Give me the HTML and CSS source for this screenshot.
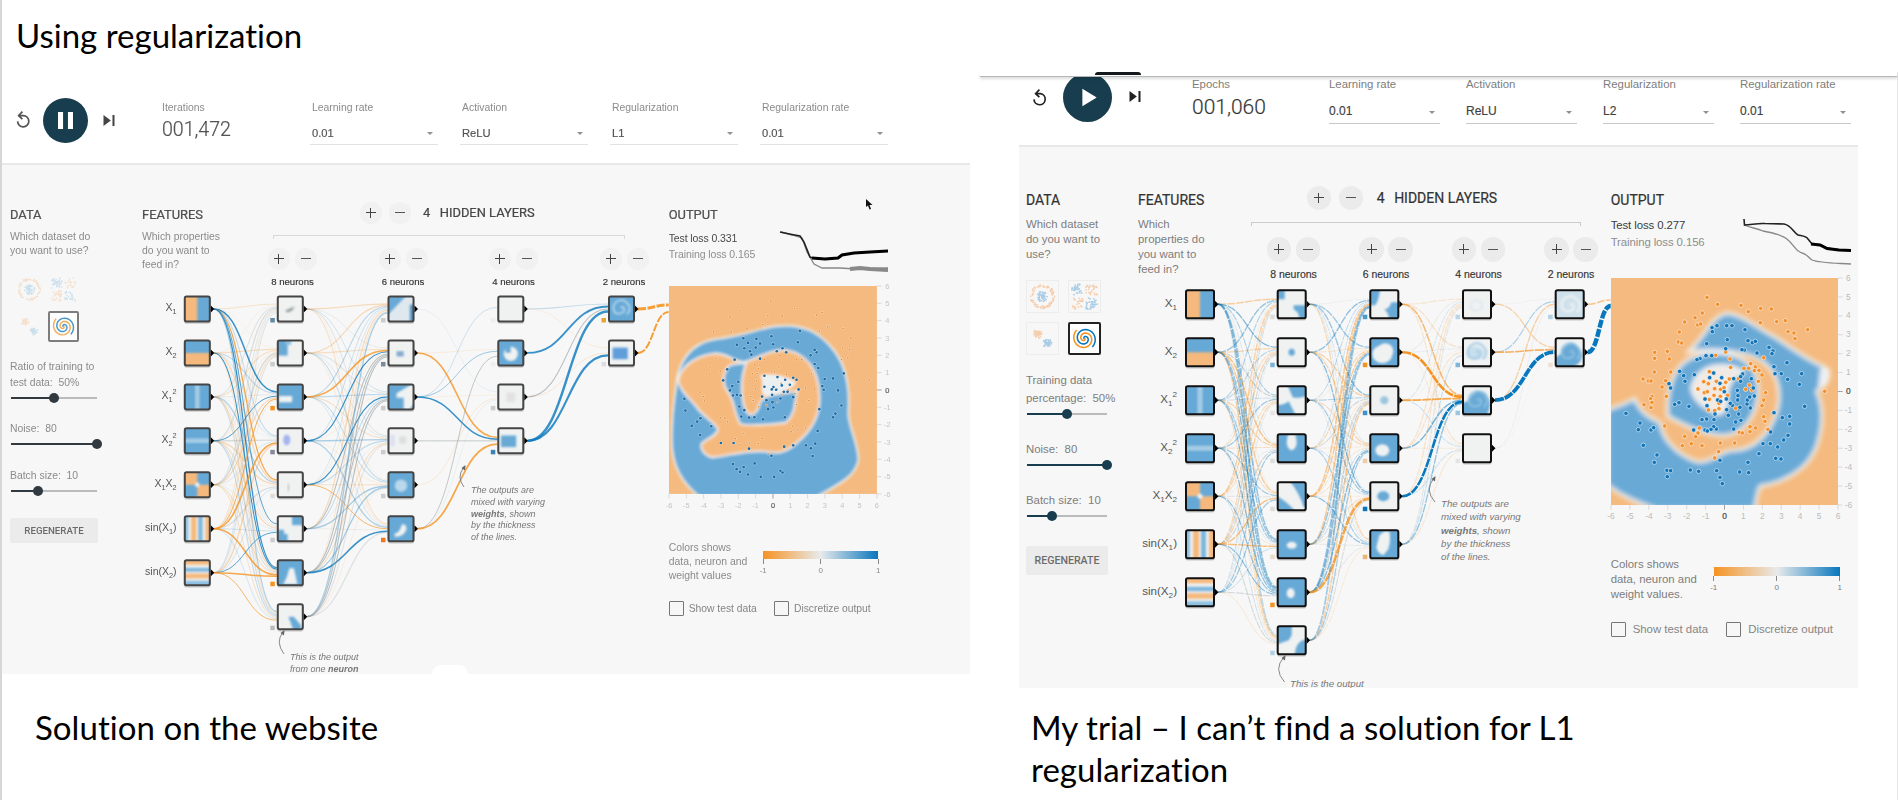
FILE: index.html
```html
<!DOCTYPE html>
<html lang="en">
<head>
<meta charset="utf-8">
<title>Using regularization</title>
<link rel="stylesheet" href="styles.css">
</head>
<body>
<main class="slide">
  <h1 class="slide-title">Using regularization</h1>
  <div class="columns">

    <section class="column column-site">
      <div class="toolbar">
        <svg class="reset" viewBox="0 0 16 18"><path d="M4.2 5.6H8.3A5.6 5.6 0 1 1 2.6 11.4M7.4 1.6 3.6 5.6 7.4 9.2" /></svg>
        <svg class="run" viewBox="0 0 48 48"><circle cx="24" cy="24" r="24"/><path d="M16 15h5.4v18H16zM26.6 15H32v18h-5.4z"/></svg>
        <svg class="step" viewBox="0 0 12 12"><path d="M0 0 8 6 0 12zM9.8 0H12v12H9.8z"/></svg>
        <div class="counter"><span class="label">Iterations</span><span class="count">001,472</span></div>
        <div class="selects">
          <div class="select"><span class="label">Learning rate</span><span class="value">0.01</span></div>
          <div class="select"><span class="label">Activation</span><span class="value">ReLU</span></div>
          <div class="select"><span class="label">Regularization</span><span class="value">L1</span></div>
          <div class="select"><span class="label">Regularization rate</span><span class="value">0.01</span></div>
        </div>
      </div>
      <div class="board">
        <div class="data">
          <h2>DATA</h2>
          <p class="hint">Which dataset do<br>you want to use?</p>
          <div class="thumbs">
            <svg class="thumb" data-kind="circle" viewBox="0 0 32 32"></svg>
            <svg class="thumb" data-kind="xor" viewBox="0 0 32 32"></svg>
            <svg class="thumb" data-kind="gauss" viewBox="0 0 32 32"></svg>
            <svg class="thumb selected" data-kind="spiral" viewBox="0 0 32 32"></svg>
          </div>
          <div class="sliders">
            <div class="slider"><span>Ratio of training to<br>test data:&nbsp; 50%</span><i class="track half"></i></div>
            <div class="slider"><span>Noise:&nbsp; 80</span><i class="track full"></i></div>
            <div class="slider"><span>Batch size:&nbsp; 10</span><i class="track third"></i></div>
          </div>
          <button class="regen">REGENERATE</button>
        </div>
        <div class="net">
          <svg class="canvas" id="net-site" viewBox="142 163 527 511"></svg>
          <div class="features"><h2>FEATURES</h2><p class="hint">Which properties<br>do you want to<br>feed in?</p></div>
          <div class="hidden-layers">
            <div class="layers-title"><b class="btn plus"></b><b class="btn"></b><span class="num">4</span><span>HIDDEN LAYERS</span></div>
            <div class="bracket"></div>
            <div class="layer-row">
              <div class="layer"><b class="btn plus"></b><b class="btn"></b><span>8 neurons</span></div>
              <div class="layer"><b class="btn plus"></b><b class="btn"></b><span>6 neurons</span></div>
              <div class="layer"><b class="btn plus"></b><b class="btn"></b><span>4 neurons</span></div>
              <div class="layer"><b class="btn plus"></b><b class="btn"></b><span>2 neurons</span></div>
            </div>
          </div>
        </div>
        <div class="output">
          <div class="loss">
            <div><h2>OUTPUT</h2><p class="test">Test loss 0.331</p><p class="train">Training loss 0.165</p></div>
            <svg class="chart" viewBox="0 0 108 46">
              <path class="train-line" d="M1 2 12 5 22 8 27 22 34 34 42 38 60 38 75 39 108 38"/>
              <path class="noise-line" d="M70 39 80 38 90 39 108 40"/>
              <path class="test-line" d="M0 2 12 4.5 20 6 24 12 30 27 33 28 45 29 58 28 62 25 74 23 90 22 108 21"/>
              <path class="bold-line" d="M32 28 45 29 58 28 62 25 74 23 90 22 108 21"/>
            </svg>
          </div>
          <svg class="plot" id="plot-site" viewBox="599 20 690 690"></svg>
          <div class="legend"><p>Colors shows<br>data, neuron and<br>weight values</p><div class="scale"><i></i><div><span>-1</span><span>0</span><span>1</span></div></div></div>
          <div class="checks"><span class="check">Show test data</span><span class="check">Discretize output</span></div>
        </div>
        <svg class="pointer" viewBox="0 0 8 11"><path d="M1 0V8L3 6.5 4.5 10.5 6 10 4.5 6H7.5z"/></svg>
        <i class="notch"></i>
      </div>
      <p class="caption">Solution on the website</p>
    </section>

    <section class="column column-trial">
      <div class="tab-edge"><i></i></div>
      <div class="toolbar">
        <svg class="reset" viewBox="0 0 16 18"><path d="M4.2 5.6H8.3A5.6 5.6 0 1 1 2 11.4M7.4 1.6 3.6 5.6 7.4 9.2" /></svg>
        <svg class="run" viewBox="0 0 48 48"><circle cx="24" cy="24" r="24"/><path d="M19 15.5 33 24 19 32.5z"/></svg>
        <svg class="step" viewBox="0 0 12 12"><path d="M0 0 8 6 0 12zM9.8 0H12v12H9.8z"/></svg>
        <div class="counter"><span class="label">Epochs</span><span class="count">001,060</span></div>
        <div class="selects">
          <div class="select"><span class="label">Learning rate</span><span class="value">0.01</span></div>
          <div class="select"><span class="label">Activation</span><span class="value">ReLU</span></div>
          <div class="select"><span class="label">Regularization</span><span class="value">L2</span></div>
          <div class="select"><span class="label">Regularization rate</span><span class="value">0.01</span></div>
        </div>
      </div>
      <div class="board">
        <div class="data">
          <h2>DATA</h2>
          <p class="hint">Which dataset<br>do you want to<br>use?</p>
          <div class="thumbs">
            <svg class="thumb" data-kind="circle" viewBox="0 0 32 32"></svg>
            <svg class="thumb" data-kind="xor" viewBox="0 0 32 32"></svg>
            <svg class="thumb" data-kind="gauss" viewBox="0 0 32 32"></svg>
            <svg class="thumb selected" data-kind="spiral" viewBox="0 0 32 32"></svg>
          </div>
          <div class="sliders">
            <div class="slider"><span>Training data<br>percentage:&nbsp; 50%</span><i class="track half"></i></div>
            <div class="slider"><span>Noise:&nbsp; 80</span><i class="track full"></i></div>
            <div class="slider"><span>Batch size:&nbsp; 10</span><i class="track third"></i></div>
          </div>
          <button class="regen">REGENERATE</button>
        </div>
        <div class="net">
          <svg class="canvas" id="net-trial" viewBox="1138 145 473 543"></svg>
          <div class="features"><h2>FEATURES</h2><p class="hint">Which<br>properties do<br>you want to<br>feed in?</p></div>
          <div class="hidden-layers">
            <div class="layers-title"><b class="btn plus"></b><b class="btn"></b><span class="num">4</span><span>HIDDEN LAYERS</span></div>
            <div class="bracket"></div>
            <div class="layer-row">
              <div class="layer"><b class="btn plus"></b><b class="btn"></b><span>8 neurons</span></div>
              <div class="layer"><b class="btn plus"></b><b class="btn"></b><span>6 neurons</span></div>
              <div class="layer"><b class="btn plus"></b><b class="btn"></b><span>4 neurons</span></div>
              <div class="layer"><b class="btn plus"></b><b class="btn"></b><span>2 neurons</span></div>
            </div>
          </div>
        </div>
        <div class="output">
          <div class="loss">
            <div><h2>OUTPUT</h2><p class="test">Test loss 0.277</p><p class="train">Training loss 0.156</p></div>
            <svg class="chart" viewBox="0 0 108 46">
              <path class="train-line" d="M1 6C8 9 13 9 20 12C30 14 40 16 45 21C51 26 52 31 57 33C64 35 64 37 69 41C76 44 90 44 108 45"/>
              <path class="test-line" d="M1 0 1.5 6C8 6 14 4 22 4.5L41 5C48 6 50 13 55 16 59 17 63 17 65 20L69 25 78 26 84 29 96 31 108 31"/>
              <path class="bold-line" d="M68 25 77 26 84 29.500 96 31 108 31.5"/>
            </svg>
          </div>
          <svg class="plot" id="plot-trial" viewBox="453 25 756 756"></svg>
          <div class="legend"><p>Colors shows<br>data, neuron and<br>weight values.</p><div class="scale"><i></i><div><span>-1</span><span>0</span><span>1</span></div></div></div>
          <div class="checks"><span class="check">Show test data</span><span class="check">Discretize output</span></div>
        </div>
      </div>
      <p class="caption">My trial – I can’t find a solution for L1<br>regularization</p>
    </section>
  </div>
</main>
<script src="network.js"></script>
</body>
</html>
```

FILE: styles.css
```css
* { box-sizing: border-box; margin: 0; padding: 0; }
body { width: 1898px; height: 800px; overflow: hidden; background: #fff; font-family: "Liberation Sans", Arial, sans-serif; }
.slide { width: 1898px; height: 800px; border-left: 2px solid #d6d6d6; overflow: hidden; }
.slide-title, .caption { font-family: Lato, sans-serif; font-weight: 400; color: #000; font-variant-ligatures: none; }
.slide-title { height: 72px; padding: 14px 0 0 14px; font-size: 33px; line-height: 42px; }
.caption { padding-top: 32px; font-size: 33px; line-height: 42px; letter-spacing: .05px; }
.columns { display: grid; grid-template-columns: 978px 918px; }
.column { height: 728px; }
h2 { font-family: Roboto, sans-serif; font-weight: 400; color: #333; -webkit-text-stroke: .2px #333; }

/* sizes of the two screens */
.column-site {
  --fs: 10.4px; --lh: 14px; --h2: 12.9px; --muted: #8b8b8b; --ink: #4a4a4a; --line: #e2e2e2;
  --knob: #303a40; --btn: 22px; --btn-bg: #f1f1f1; --plot: 231px;
}
.column-trial {
  --fs: 11.4px; --lh: 15px; --h2: 14px; --muted: #7d7d7d; --ink: #3c3c3c; --line: #c8c8c8;
  --knob: #183d4e; --btn: 24.5px; --btn-bg: #ebebeb; --plot: 252px; border-right: 1px solid #e6e6e6;
}
.column-site .toolbar, .column-site .board { filter: blur(.45px); }
.column-site .caption { padding-left: 33px; }
.column-trial .caption { padding: 18px 0 0 51px; }

/* toolbar */
.tab-edge { position: relative; height: 4.5px; border-bottom: 1.5px solid #b4b8b7; box-shadow: 0 2px 3px #0002; }
.tab-edge i { display: block; width: 46px; height: 3px; margin-left: 115px; border-radius: 3px 3px 0 0; background: #15181c; }
.toolbar { display: flex; align-items: flex-start; }
.toolbar svg { flex: none; }
.reset { width: 16px; height: 18px; fill: none; stroke: #333; stroke-width: 1.7; }
.run circle { fill: #183d4e; }
.run path { fill: #fff; }
.step { width: 12px; height: 12px; fill: #222; }
.label, .count, .value { display: block; white-space: nowrap; }
.label { font-size: var(--fs); line-height: 14px; color: var(--muted); }
.count { font-family: Roboto, sans-serif; font-weight: 300; color: #333; line-height: 24px; -webkit-text-stroke: .2px #444; }
.selects { display: flex; }
.select { position: relative; border-bottom: 1px solid var(--line); }
.select::after { content: ""; position: absolute; right: 5px; bottom: 9px; border: 3.5px solid transparent; border-top: 3.5px solid #909090; border-bottom: 0; }
.value { color: #404040; line-height: 16px; -webkit-text-stroke: .15px #404040; }

.column-site .toolbar { height: 91px; }
.column-site .reset { margin: 38px 0 0 13px; stroke: #555; }
.column-site .run { width: 45px; height: 45px; margin: 25.5px 0 0 12px; }
.column-site .step { margin: 43px 0 0 15px; height: 11px; fill: #444; }
.column-site .counter { width: 148px; margin: 29px 0 0 47px; }
.column-site .count { font-size: 19.6px; margin-top: 3px; color: #555; }
.column-site .selects { gap: 22px; margin-top: 29px; }
.column-site .select { width: 128px; height: 43.5px; padding-left: 2px; }
.column-site .value { font-size: 11.2px; margin-top: 9.5px; color: #555; }

.column-trial .toolbar { height: 68.5px; overflow: hidden; }
.column-trial .reset { margin: 11px 0 0 52px; stroke: #222; }
.column-trial .run { width: 49px; height: 49px; margin: -4px 0 0 14.5px; }
.column-trial .step { margin: 14.5px 0 0 17px; height: 11px; }
.column-trial .counter { width: 137px; margin: .5px 0 0 51.5px; }
.column-trial .count { font-size: 21px; margin-top: 4px; }
.column-trial .selects { gap: 26px; margin-top: .5px; }
.column-trial .select { width: 111px; height: 46.5px; }
.column-trial .value { font-size: 12px; margin-top: 12px; }

/* board */
.board { position: relative; display: flex; background: #f7f7f7; border-top: 2px solid #e8e8e8; overflow: hidden; }
.column-site .board { width: 968px; height: 511px; padding-left: 8px; }
.column-trial .board { width: 839px; height: 543px; margin-left: 39px; padding-left: 7px; }
h2 { font-size: var(--h2); line-height: 18px; white-space: nowrap; }
.hint { font-size: var(--fs); line-height: var(--lh); color: var(--muted); white-space: nowrap; }
.column-site .data { width: 132px; padding-top: 40.5px; }
.column-trial .data { width: 112px; padding-top: 44px; }
.column-site .hint { margin-top: 6px; }
.column-trial .hint { margin-top: 8px; }
.column-site h2 { color: #555; }

.thumbs { display: grid; }
.thumb { border: 1px solid #e4e4e4; opacity: .5; }
.thumb.selected { border: 2px solid #222; border-radius: 2px; opacity: 1; background: #fff; }
.column-site .thumbs { grid-template-columns: 31px 31px; gap: 6px 3px; margin: 16px 0 0 4px; }
.column-site .thumb { width: 31px; height: 31px; border-color: transparent; opacity: .28; }
.column-site .thumb.selected { border-color: #555; opacity: .75; }
.column-trial .thumbs { grid-template-columns: 33px 33px; gap: 9px; margin-top: 18px; }
.column-trial .thumb { width: 33px; height: 33px; }

.slider { font-size: var(--fs); color: var(--muted); white-space: nowrap; }
.slider span { display: block; }
.track { position: relative; display: block; height: 2px; background: linear-gradient(90deg, var(--knob) var(--at), #bbb var(--at)); }
.track::after { content: ""; position: absolute; left: var(--at); top: -4px; width: 10px; height: 10px; margin-left: -5px; border-radius: 50%; background: var(--knob); }
.half { --at: 50%; }
.full { --at: 100%; }
.third { --at: 31%; }
.column-site .sliders { margin-top: 17px; }
.column-site .slider { line-height: 16px; height: 47px; }
.column-site .slider:first-child { height: 62px; }
.column-site .track { width: 86px; margin: 6px 0 0 1px; }
.column-trial .sliders { margin-top: 16px; }
.column-trial .slider { line-height: 18px; height: 51px; }
.column-trial .slider:first-child { height: 69px; }
.column-trial .track { width: 80px; margin: 6px 0 0 1px; }
.regen { display: block; border: 0; background: #ebebeb; color: #6b6b6b; border-radius: 2px; font-family: Roboto, sans-serif; font-weight: 500; }
.column-site .regen { width: 88px; height: 25px; margin-top: 3.5px; font-size: 9.7px; }
.column-trial .regen { width: 82px; height: 29px; font-size: 10.6px; margin-top: 4px; }

/* network */
.net { position: relative; display: flex; }
.column-site .net { width: 526.7px; }
.column-trial .net { width: 472.7px; }
.canvas { position: absolute; left: 0; top: -2px; overflow: visible; }
.column-site .canvas { width: 527px; height: 511px; }
.column-trial .canvas { width: 473px; height: 543px; }
.features { position: relative; flex: none; }
.column-site .features { width: 95.25px; padding-top: 40.5px; }
.column-trial .features { width: 109.25px; padding-top: 44px; }
.hidden-layers { position: relative; flex: none; }
.layers-title { display: flex; align-items: center; font-family: Roboto, sans-serif; font-size: var(--h2); color: #333; height: 26px; white-space: nowrap; -webkit-text-stroke: .2px #333; }
.btn { flex: none; width: var(--btn); height: var(--btn); border-radius: 50%; background: linear-gradient(#555, #555) center / 10px 1.4px no-repeat, var(--btn-bg); }
.btn.plus { background: linear-gradient(#444, #444) center / 10px 1.4px no-repeat, linear-gradient(#444, #444) center / 1.4px 10px no-repeat, var(--btn-bg); }
.bracket { height: 4px; border: 1px solid #ccc; border-bottom: 0; }
.layer-row { display: grid; }
.layer { display: flex; flex-wrap: wrap; justify-content: center; align-content: flex-start; color: #333; }
.layer span { width: 100%; text-align: center; line-height: 12px; -webkit-text-stroke: .15px #333; }
.column-site .layers-title { margin: 34.5px 0 0 122.25px; gap: 7.5px; color: #4a4a4a; }
.column-site .num { margin: 0 2px 0 4.5px; }
.column-site .bracket { width: 352px; margin: 9px 0 0 36px; border-color: #d8d8d8; }
.column-site .layer-row { grid-template-columns: repeat(4, 110.5px); margin-top: 9.5px; }
.column-site .layer { gap: 5.5px 5px; font-size: 9.6px; }
.column-trial .layers-title { margin: 38px 0 0 59.5px; gap: 7.5px; }
.column-trial .num { margin: 0 2px 0 6px; }
.column-trial .bracket { width: 330px; margin: 11px 0 0 3.5px; }
.column-trial .layer-row { grid-template-columns: repeat(4, 92.5px); margin-top: 11px; }
.column-trial .layer { gap: 6px 4.5px; font-size: 10.5px; }

.link { fill: none; }
.box { fill: none; stroke: #111; stroke-width: 2; }
.shade { fill: #0002; }
.port { fill: #000; }
.column-site .box { stroke: #454545; }
.name { text-anchor: end; fill: #555; }
.sub { font-size: 70%; }
.note { font-style: italic; fill: #777; }
.note-arrow { fill: none; stroke: #888; stroke-width: 1; }
.strong { font-weight: 700; }

/* output */
.output { flex: none; }
.column-site .output { padding-top: 40.5px; width: 231px; }
.column-trial .output { padding-top: 44px; width: 247px; }
.loss { display: flex; }
.loss p { white-space: nowrap; letter-spacing: -.1px; }
.test { color: var(--ink); }
.train { color: #8e8e8e; }
.chart { flex: none; width: 108px; height: 46px; overflow: visible; fill: none; }
.test-line { stroke: #222; stroke-width: 1.6; }
.bold-line { stroke: #000; stroke-width: 3; }
.train-line { stroke: #888; stroke-width: 1.3; }
.noise-line { stroke: #888; stroke-width: 4; }
.column-site .loss { height: 80.5px; }
.column-site .loss > div { width: 111.5px; }
.column-site .loss p { font-size: 10.5px; line-height: 16px; }
.column-site .test { margin-top: 6.5px; }
.column-site .chart { margin-top: 24.5px; }
.column-trial .loss { height: 87px; }
.column-trial .loss > div { width: 132.5px; }
.column-trial .loss p { font-size: 11.4px; line-height: 17.5px; }
.column-trial .test { margin-top: 7.5px; }
.column-trial .chart { margin-top: 28px; }
.plot { display: block; width: var(--plot); height: var(--plot); overflow: visible; }
.tick { font-size: 25px; fill: #bbb; text-anchor: middle; }
.tick.zero { fill: #444; stroke: #444; stroke-width: .6; }
.column-site .tick { font-size: 22px; fill: #c4c4c4; }
.column-site .tick.zero { fill: #777; }
.legend { display: flex; color: var(--muted); font-size: var(--fs); line-height: var(--lh); white-space: nowrap; }
.scale i { display: block; background: linear-gradient(90deg, #f59322, #e8eaeb, #0877bd); }
.scale div { display: flex; justify-content: space-between; font-size: 8px; line-height: 10px; }
.scale span { position: relative; width: 10px; margin: 0 -5px; padding-top: 7px; text-align: center; }
.scale span::before { content: ""; position: absolute; left: 4.5px; top: 0; width: 1px; height: 5px; background: #888; }
.column-site .legend { margin-top: 24px; }
.column-site .legend p { width: 94.5px; }
.column-site .scale { width: 115px; padding-top: 9.5px; }
.column-site .scale i { height: 8px; }
.column-trial .legend { margin-top: 27px; }
.column-trial .legend p { width: 103px; }
.column-trial .scale { width: 126px; padding-top: 10px; }
.column-trial .scale i { height: 9px; }
.checks { display: flex; color: #858585; font-size: var(--fs); line-height: 14px; white-space: nowrap; }
.check { display: flex; align-items: center; }
.check::before { content: ""; width: 13px; height: 13px; border: 1.5px solid #777; border-radius: 1px; }
.column-site .checks { margin-top: 18px; font-size: 10.3px; }
.column-site .check { width: 105.3px; gap: 5px; }
.column-trial .checks { margin-top: 19.5px; }
.column-trial .check { width: 115.5px; gap: 7px; }

.pointer { position: absolute; left: 863px; top: 34px; width: 8px; height: 11px; fill: #111; }
.notch { position: absolute; left: 430px; bottom: 0; width: 36px; height: 9px; border-radius: 12px 12px 0 0; background: #fff; }
```

FILE: network.js
```js
const BLUE = '#67a9d6', ORANGE = '#f5b97d', PALE = '#f0f2f2';
const DEEP_BLUE = '#0877bd', DEEP_ORANGE = '#f59322';

let seed = 11;
const rand = () => (seed = (seed * 16807) % 2147483647) / 2147483647;

const blurDef = (id, r) =>
  `<filter id="${id}" x="-20%" y="-20%" width="140%" height="140%"><feGaussianBlur stdDeviation="${r}"/></filter>`;

/* Tile art on a 30x30 square: base colour, then "colour|path" shapes. */
const rect = (c, x, y, w, h) => `${c}|M${x} ${y}h${w}v${h}h${-w}z`;
const blob = (c, x, y, rx, ry) => `${c}|M${x - rx} ${y}a${rx} ${ry} 0 1 0 ${2 * rx} 0a${rx} ${ry} 0 1 0 ${-2 * rx} 0z`;
const FEATURES = [
  [ORANGE, rect(BLUE, 15, -3, 20, 36)],
  [BLUE, rect(ORANGE, -3, 15, 36, 20)],
  [BLUE, rect('#a5cde5', 12.5, -3, 5, 36)],
  [BLUE, rect('#a5cde5', -3, 12.5, 36, 5)],
  [BLUE, rect(ORANGE, -3, -3, 18, 18), rect(ORANGE, 15, 15, 20, 20), blob(PALE, 15, 15, 2.5, 2.5)],
  [PALE, rect('#8dbfe0', -2, -3, 7, 36), rect(ORANGE, 8, -3, 6, 36), rect('#7db6dc', 16, -3, 5, 36), rect(ORANGE, 24, -3, 9, 36)],
  [PALE, rect(ORANGE, -3, -2, 36, 8), rect('#7db6dc', -3, 9.5, 36, 4.5), rect(ORANGE, -3, 16, 36, 5.5), rect('#8dbfe0', -3, 24, 36, 9)]
];

const spiral = (x, y) => `M${x} ${y}q3 -3 4 1t-5 5t-7 -5t5 -9t11 3t-1 12`;

const screens = {
  'net-site': {
    size: 27, top: 309, step: 43.95, xs: [197.3, 290.3, 401, 510.8, 621.5], font: 10.5,
    density: .75, gain: .5, thin: .68, out: [668.7, 305, 312],
    layers: [FEATURES,
      [[PALE, 'rgba(90,100,100,.6)|M9 17L20 12L17 17L12 19z'], [PALE, rect(BLUE, -2, -2, 14, 20), rect('#8dbfe0', 10, 0, 6, 6)],
       [BLUE, rect(PALE, 2, 14, 15, 7)], [PALE, blob('#a4b4ec', 11, 14, 4, 6)], [PALE, 'rgba(90,90,90,.3)|M12 14h2v8h-2z'],
       [PALE, rect(BLUE, 17, -2, 15, 13), 'rgba(103,169,214,1)|M-2 16h10v5h4v11h-14z'], [BLUE, `${PALE}|M14 10h5l4 18h-16l4 -8z`],
       [PALE, `${BLUE}|M13 15h6l8 10v7h-8z`]],
      [['#dfe8ee', `${BLUE}|M-2 -2h25L-2 24z`, rect('#4f93c2', 25, 10, 8, 23)], [PALE, rect('#85aacd', 10, 13, 8, 6)],
       [BLUE, `${PALE}|M32 -2v22l-10 12l-4 -4v-12h-8v-5z`], [PALE, rect('#dcdff0', 3, 8, 5, 13), rect('#dededf', 13, 10, 8, 8)],
       [BLUE, blob('#b9d8ec', 15, 16, 7, 7)], [BLUE, `${PALE}|M8 20q5 1 8 -10q6 0 5 6q-3 8 -13 8z`]],
      [[PALE], [BLUE, blob(PALE, 15, 16, 8, 8), rect(BLUE, 9, 8, 6, 7)], [PALE, rect('#e2e2e2', 10, 10, 10, 11)],
       [PALE, rect(BLUE, 4, 9, 17, 13)]],
      [[BLUE, `line:#b5d7ec|${spiral(14, 14)}`], [PALE, rect('#5f9edb', 5, 9, 17, 13)]]],
    strong: {
      '0-0-2': [1, 2.2], '0-0-6': [1, 1.8], '0-0-4': [0, 1.8], '0-0-5': [1, 1.2], '0-5-3': [0, 2.4], '0-5-6': [0, 2.2],
      '0-5-2': [0, 1.4], '0-6-6': [0, 2.2], '0-6-7': [0, 1.2], '0-6-5': [1, 1.2], '0-1-6': [1, 1.5], '0-3-2': [1, 1.3],
      '1-2-1': [0, 2.4], '1-3-1': [1, 1.6], '1-4-2': [1, 1.6], '1-6-5': [1, 2.3], '1-4-5': [0, 1.2],
      '1-7-1': [2, 1.6], '1-6-1': [2, 1.5], '1-6-2': [2, 1.5], '1-5-1': [2, 1.5], '1-7-2': [2, 1.5],
      '2-1-3': [0, 2.4], '2-2-3': [1, 2.2], '2-5-3': [0, 2.6], '2-3-3': [2, 1.2], '2-5-1': [2, 1.3], '2-2-1': [1, .7],
      '3-1-0': [1, 2.7], '3-3-0': [1, 3.6], '3-3-1': [1, 3.2], '3-2-0': [2, 1.5]
    },
    outWeights: [[0, 3], [0, 2]],
    bias: [['#5f8ba9', '#ccc', DEEP_ORANGE, '#889', '#ddd', '#ccc', DEEP_ORANGE, '#bbb'],
           ['#ccc', '#7a8a98', '#ccc', '#ccc', '#ccc', '#f07822'], ['#eee', '#eee', '#ccc', '#3c83b5'], ['#e6a52e', '#ddd']],
    notes: [[471, 490, 11.6, ['The outputs are', 'mixed with varying', '*weights|, shown', 'by the thickness', 'of the lines.']],
            [290, 656.5, 11.7, ['This is the output', 'from one *neuron|']]],
    noteFont: 9, arrows: ['M464 487Q456 477 464 467', 'M284 654Q275 642 283 632']
  },
  'net-trial': {
    size: 30, top: 304.2, step: 48, xs: [1200, 1291.7, 1384.3, 1477, 1569.7], font: 11.6,
    density: 1, gain: 1, thin: .85, out: [1610.7, 300, 306],
    layers: [FEATURES,
      [[PALE, rect(BLUE, -2, -2, 10, 12), `${BLUE}|M17 16h15v16h-10q2 -8 -5 -12z`], [PALE, blob(BLUE, 15, 15, 3.2, 3.5)],
       [PALE, `${BLUE}|M10 -2h22v12q-12 4 -16 2z`, `${BLUE}|M-2 20q10 0 14 -4l8 16h-22z`],
       [BLUE, blob(PALE, 15, 9, 5, 8), rect(PALE, 11, 0, 8, 6)],
       [PALE, `${BLUE}|M12 -2h20v28h-5q-3 -12 -15 -28z`, `${BLUE}|M-2 14q12 5 22 18h-22z`],
       [BLUE, blob(PALE, 15, 16, 5, 3.5)], [BLUE, blob(PALE, 14, 16, 4, 5)],
       [PALE, `${BLUE}|M-2 -2h17v12l-3 5q-6 2 -14 5z`, `${BLUE}|M18 32q0 -18 14 -18v18z`]],
      [[PALE, `${BLUE}|M-2 -2h13q-1 12 -5 18h-8z`, `${BLUE}|M20 32q0 -8 -5 -12q5 0 7 -7h10v19z`], [BLUE, blob(PALE, 13, 17, 10, 9), blob(PALE, 16, 14, 8, 8)],
       [PALE, blob('#9bc5e0', 15, 15, 4, 4)], [BLUE, blob(PALE, 13, 17, 7, 6)], [PALE, blob(BLUE, 14, 15, 6, 5)],
       [BLUE, `${PALE}|M10 6l5 -4h5q2 8 -1 18l-5 6q-6 -2 -7 -8z`]],
      [[PALE, 'line:#dfe8ee|M9 14q5 -6 11 0v5q-6 5 -11 0z'], [PALE, blob('#c8dfed', 13, 16, 9, 7), `line:#a7cce4|${spiral(14, 15)}`],
       [PALE, `${BLUE}|M-2 18q8 0 12 -8q10 -8 15 0q6 8 -1 22h-26z`, `line:#8bbfe0|${spiral(15, 15)}`], [PALE]],
      [['#cfe1ec', `line:#f0f2f2|${spiral(15, 16)}`], [PALE, `${BLUE}|M-2 20q8 0 11 -9q7 -7 13 -2q9 6 3 16l-8 7h-19z`, `line:#8bbfe0|${spiral(15, 15)}`]]],
    strong: {
      '0-0-6': [1, 2.2, .42], '0-0-5': [1, 1.8, .4], '0-1-6': [1, 1.6, .45], '0-1-5': [1, 1.4, .4], '0-0-1': [1, 1.4, .5],
      '0-0-7': [1, 1.6, .25], '0-3-6': [1, 1.5, .42], '0-5-4': [0, 1.6, .55], '0-5-5': [0, 1.6, .55], '0-5-6': [1, 1.3, .45],
      '0-1-3': [0, 1.5, .55], '0-6-5': [1, 1, .25], '0-4-6': [1, 1.4, .4], '0-2-6': [1, 1.6, .38],
      '1-6-4': [0, 3, .8], '1-7-0': [1, 2, .35], '1-6-0': [1, 2.2, .42], '1-6-1': [1, 2, .42], '1-5-0': [0, 1.8, .45],
      '1-4-0': [0, 1.8, .45], '1-5-1': [1, 1.6, .4], '1-4-1': [0, 1.5, .45], '1-6-3': [1, 1.6, .45], '1-1-4': [1, 1.5, .45],
      '2-1-2': [0, 3, 1], '2-2-2': [0, 2.2, .8], '2-4-2': [1, 3, 1], '2-0-2': [0, 1.8, .6], '2-3-2': [1, 1.8, .5], '2-5-2': [1, 1.6, .4],
      '3-2-1': [1, 4.4, 1], '3-1-1': [0, 2, .7], '3-2-0': [0, 1.6, .4], '3-1-0': [1, 1.4, .3], '3-0-1': [0, 1.4, .4]
    },
    outWeights: [[0, 1.6, .5], [1, 4.4, 1]],
    bias: [['#ddd', '#79b3da', '#e4e4e4', '#ddd', '#ddd', '#e8dccd', DEEP_ORANGE, '#b2d0e3'],
           ['#4b9ace', DEEP_ORANGE, '#3c93cc', '#efcca5', DEEP_BLUE, '#efb672'], ['#b9d5e6', '#7db6dc', '#9cc6e0', '#e4e4e4'], ['#b0d0e5', '#efe0d1']],
    notes: [[1441, 504, 13.1, ['The outputs are', 'mixed with varying', '*weights|, shown', 'by the thickness', 'of the lines.']],
            [1290, 684, 13, ['This is the output']]],
    noteFont: 9.7, arrows: ['M1435 502Q1424 490 1434 478', 'M1284.5 682Q1273 669 1284 657']
  }
};

const NAMES = [['X', '1'], ['X', '2'], ['X', '1'], ['X', '2'], ['X', '1'], ['sin(X', '1'], ['sin(X', '2']];

function nameText(i, x, y, f) {
  const sub = s => `<tspan class="sub" dy="${f * .3}">${s}</tspan>`;
  const back = s => `<tspan dy="${-f * .3}">${s}</tspan>`;
  const n = NAMES[i];
  let t = n[0] + sub(n[1]);
  if (i === 2 || i === 3) t += `<tspan class="sub" dy="${-f * .8}">2</tspan>`;
  if (i === 4) t += back('X') + sub('2');
  if (i > 4) t += back(')');
  return `<text class="name" x="${x}" y="${y}" font-size="${f}">${t}</text>`;
}

function link(x1, y1, x2, y2, tone, w, o, dash) {
  const color = [DEEP_ORANGE, DEEP_BLUE, '#8f9a9c'][tone];
  const m = (x1 + x2) / 2;
  return `<path class="link" d="M${x1} ${y1}C${m} ${y1} ${m} ${y2} ${x2} ${y2}" stroke="${color}" stroke-width="${w}" opacity="${o}" stroke-dasharray="${dash}"/>`;
}

function drawNetwork(id) {
  const s = screens[id], h = s.size / 2, k = s.size / 30, f = s.font;
  const cy = i => s.top + i * s.step;
  let links = '', top = '', nodes = '';
  for (let l = 0; l < 4; l++) {
    const from = s.layers[l], to = s.layers[l + 1];
    from.forEach((_, a) => to.forEach((_, b) => {
      const x1 = s.xs[l] + h + 3, x2 = s.xs[l + 1] - h;
      const y2 = cy(b) + ((a - from.length / 2) / from.length) * 10;
      const st = s.strong[`${l}-${a}-${b}`];
      const r = rand(), t = rand();
      if (st) top += link(x1, cy(a), x2, y2, st[0], st[1] * s.thin, st[2] || (st[0] === 2 ? .6 : .8), s.gain < 1 ? 'none' : '9 1');
      else if (l < 2 || s.gain === 1 || t < .5)
        links += link(x1, cy(a), x2, y2, r < .45 ? 0 : r < .85 ? 1 : 2, .7 + t * .7, (.12 + t * .3) * (s.gain < 1 ? .8 : l > 1 ? .55 : 1), s.gain < 1 ? 'none' : '8 1');
    }));
  }
  s.outWeights.forEach((w, i) => {
    top += link(s.xs[4] + h + 3, cy(i), s.out[0], s.out[i + 1], w[0], w[1], w[2] || .9, '8 1.5');
  });
  s.layers.forEach((layer, l) => layer.forEach((art, i) => {
    const x = s.xs[l] - h, y = cy(i) - h;
    if (l) nodes += `<rect x="${x - 6.5}" y="${y + s.size - 4.5}" width="4.5" height="4.5" fill="${s.bias[l - 1][i]}"/>`;
    nodes += `<rect class="shade" x="${x}" y="${y + 1.5}" width="${s.size}" height="${s.size}" rx="3"/>`;
    nodes += `<svg x="${x + 1}" y="${y + 1}" width="${s.size - 2}" height="${s.size - 2}" viewBox="1 1 28 28"><rect width="30" height="30" fill="${art[0]}"/><g filter="url(#${id}-soft)">`;
    art.slice(1).forEach(a => {
      const [c, d] = a.split('|');
      nodes += c.startsWith('line:')
        ? `<path d="${d}" fill="none" stroke="${c.slice(5)}" stroke-width="2"/>`
        : `<path d="${d}" fill="${c}"/>`;
    });
    nodes += `</g></svg><rect class="box" x="${x + 1}" y="${y + 1}" width="${s.size - 2}" height="${s.size - 2}" rx="1.8"/>`;
    nodes += `<path class="port" d="M${x + s.size} ${cy(i) - 3.5}l3.5 3.5l-3.5 3.5z"/>`;
    if (!l) nodes += nameText(i, x - 8 * k, cy(i) + 2.5 * k, f);
  }));
  let notes = '';
  s.notes.forEach(([x, y, lh, lines]) => lines.forEach((t, i) => {
    const html = t.replace(/\*(.*?)\|/, '<tspan class="strong">$1</tspan>');
    notes += `<text class="note" font-size="${s.noteFont}" x="${x}" y="${y + i * lh + 3.3}">${html}</text>`;
  }));
  s.arrows.forEach(d => {
    const [ex, ey] = d.split(' ').slice(-2).map(Number);
    notes += `<path class="note-arrow" d="${d}"/><path fill="#666" d="M${ex + 1.5} ${ey - 2}l-4 3l3.5 2.5z"/>`;
  });
  document.getElementById(id).innerHTML = blurDef(`${id}-soft`, 1) + links + top + nodes + notes;
}

/* Decision surfaces and sample points. */
const plots = {
  'plot-site': {
    x: 599, y: 20, s: 621, blur: 4.5, ring: 5,
    shapes: [
      [BLUE, 'M620 320C625 250 660 190 740 178C820 170 870 145 920 140C1000 130 1050 160 1090 210C1130 260 1140 330 1135 400C1135 440 1165 490 1165 540C1155 590 1110 610 1040 650H690C640 610 607 560 607 480C607 430 612 370 620 320z'],
      [ORANGE, 'M626 300C640 250 690 225 740 221C780 224 790 245 825 247C870 235 900 208 950 212C1010 222 1045 270 1048 340C1055 410 1020 455 985 485C950 520 920 522 890 515C840 508 780 526 730 532C705 528 690 505 697 490C715 475 745 465 745 448C735 425 700 410 680 380C660 355 630 330 626 300z'],
      [BLUE, 'M778 258C795 250 815 252 830 250C812 290 812 360 830 395C845 415 865 400 870 370C890 335 960 345 982 332C972 380 975 405 948 428C900 435 830 438 812 432C790 395 800 365 768 325C758 300 765 275 778 258z'],
      ['#eaf0f2', 'M875 290C900 280 960 295 975 310C960 330 920 340 885 345C870 330 890 310 875 290z']],
    dots: 2.6, halo: 'none',
    orange: '903,66 811,94 781,113 974,87 894,108 937,110 1040,107 1056,99 1119,147 1142,175 1138,210 1133,235 1114,240 1117,205 1197,301 732,157 785,157 832,148 879,135 1073,142 1048,155 740,236 722,262 711,283 752,275 692,337 701,350 705,364 752,414 766,414 774,425 820,460 797,476 811,494 840,489 863,491 877,476 968,439 964,455 984,450 1007,444 980,374 1017,362 1034,328 1025,282 995,240 980,240 931,228 855,255 866,267 848,282 862,282 838,303 860,303 847,317 858,328 843,350 850,362 867,381 884,240 914,276 927,262 950,284 934,311 922,328 955,331 936,345 975,341 1007,325 875,352 923,367 890,376 895,521 866,490',
    blue: '821,176 802,196 860,178 835,190 824,206 871,192 858,204 841,215 845,225 905,170 910,194 921,215 938,206 949,218 990,154 984,188 1022,227 1040,218 1034,211 1034,253 1045,265 871,237 795,240 773,269 761,302 806,306 788,319 781,332 790,347 802,345 813,347 809,380 824,391 815,410 838,413 854,412 880,418 877,350 884,321 884,288 923,292 946,300 970,294 980,300 960,315 986,329 970,352 953,336 942,336 932,356 919,330 911,322 907,345 890,361 908,367 911,383 895,388 945,412 906,329 936,317 1064,298 1089,296 1121,281 1104,332 1114,377 1096,401 1089,412 1057,319 1061,330 1048,388 1043,453 1036,491 1023,505 1008,496 1028,528 970,496 943,500 905,527 838,506 792,489 754,489 725,439 692,465 667,438 683,425 693,415 648,392 645,357 790,552 822,561 801,567 811,575 835,583 855,550 873,590 932,572 938,577 913,590'
  },
  'plot-trial': {
    x: 453, y: 25, s: 681, blur: 8, ring: 9,
    shapes: [
      [BLUE, 'M440 422C480 405 505 400 524 386C538 420 555 438 600 458C605 500 640 550 710 576C760 580 780 542 820 542C900 540 950 460 957 390C960 310 920 275 870 258C820 242 750 236 685 246C735 205 750 140 802 130C850 135 890 175 950 205C1000 240 1050 275 1090 290C1115 310 1110 335 1070 365C1090 410 1090 470 1070 530C1040 610 960 640 900 650C890 670 888 690 885 720H590C540 700 500 690 440 645z'],
      [BLUE, 'M623 440C620 380 632 330 655 295C690 250 760 240 820 258C880 275 900 320 893 385C885 440 850 495 790 498C730 495 680 470 623 440z'],
      ['#f1e9e2', 'M695 355C705 315 735 290 775 288C810 285 840 295 850 310C810 320 805 350 800 380C805 410 790 440 765 430C740 415 700 395 695 355z'],
      ['#e8eef2', 'M1085 300L1105 300L1100 340L1080 350z']],
    dots: 6.6, halo: '#fff',
    orange: '741,83 773,104 843,107 865,126 902,116 934,118 901,159 950,156 976,153 984,186 1002,190 1005,207 1043,180 727,130 705,144 674,157 713,166 722,163 658,187 655,217 665,220 622,245 584,248 584,266 628,268 583,307 632,307 549,328 565,334 573,334 617,333 606,352 576,380 572,387 619,380 552,405 576,398 573,414 614,469 767,257 797,247 810,268 812,293 872,282 866,296 852,296 886,292 897,302 883,303 906,316 895,335 911,264 748,306 731,336 745,342 714,358 733,369 742,366 764,357 769,335 782,359 792,354 797,338 808,328 835,327 857,359 875,361 868,346 762,377 748,389 781,380 793,366 803,377 777,401 777,417 745,421 764,423 827,416 917,369 911,391 906,408 911,441 915,455 870,471 887,475 870,486 924,479 838,488 847,490 718,475 714,490 707,501 674,500 694,522 667,528 726,528 781,520 824,520 776,546 764,565 1094,365',
    blue: '756,174 757,186 771,168 800,168 816,168 855,180 740,222 802,210 797,237 864,213 877,219 886,215 891,250 853,241 846,240 927,233 939,244 936,252 981,279 942,291 945,312 964,312 983,329 1025,312 1018,344 1034,410 755,258 738,258 720,267 711,270 659,305 671,318 675,335 703,315 627,342 632,355 644,404 657,399 687,410 761,310 749,324 785,324 780,341 821,327 848,313 842,321 842,335 874,327 880,355 832,362 834,378 833,391 840,413 817,407 811,401 836,433 867,385 883,379 861,403 871,415 805,437 800,420 773,391 735,388 741,408 793,366 827,457 843,452 821,478 765,433 740,448 726,450 762,450 769,478 761,471 753,479 735,481 701,481 742,484 799,388 782,395 862,391 869,382 498,431 540,460 535,480 573,481 581,474 550,527 591,556 583,578 621,602 632,603 622,621 691,601 716,605 780,572 770,603 780,623 787,642 839,607 866,609 864,578 897,552 909,522 931,522 932,487 953,532 971,511 984,497 989,463 989,440 967,444 942,429 947,566 963,568'
  }
};

function drawPlot(id) {
  const p = plots[id], u = p.s / 12;
  let out = blurDef(`${id}-soft`, p.blur) + `<clipPath id="${id}-clip"><rect x="${p.x}" y="${p.y}" width="${p.s}" height="${p.s}"/></clipPath>`;
  out += `<g clip-path="url(#${id}-clip)"><rect x="${p.x}" y="${p.y}" width="${p.s}" height="${p.s}" fill="#f4ba7f"/><g filter="url(#${id}-soft)">`;
  p.shapes.forEach(([c, d]) => { out += `<path d="${d}" fill="${c}" stroke="#f4f5f5" stroke-width="${p.ring}"/>`; });
  out += '</g></g>';
  [[p.orange, '#f4902c', '#d98a3a', 2.4], [p.blue, '#0f74b9', '#1f6ca5', 4]].forEach(([list, bright, dim, r]) => {
    list.split(' ').forEach(c => {
      const [x, y] = c.split(',');
      out += p.halo === 'none'
        ? `<circle cx="${x}" cy="${y}" r="${r + 2}" fill="#fff" opacity=".35"/><circle cx="${x}" cy="${y}" r="${r}" fill="${dim}"/>`
        : `<circle cx="${x}" cy="${y}" r="${p.dots}" fill="${bright}" stroke="#fff" stroke-width="2" stroke-opacity=".8"/>`;
    });
  });
  for (let i = -6; i <= 6; i++) {
    const gx = p.x + (i + 6) * u, gy = p.y + (6 - i) * u, z = i === 0 ? ' zero' : '';
    const line = i === 0 ? '#777' : '#ccc';
    out += `<path d="M${gx} ${p.y + p.s}v14M${p.x + p.s} ${gy}h14" stroke="${line}" stroke-width="2"/>`;
    out += `<text class="tick${z}" x="${gx}" y="${p.y + p.s + 41}">${i}</text>`;
    out += `<text class="tick${z}" x="${p.x + p.s + 31}" y="${gy + 8}">${i}</text>`;
  }
  document.getElementById(id).innerHTML = out;
}

/* Dataset thumbnails. */
function drawThumb(el) {
  const o = '#f3a765', b = '#5da3d3';
  let t = '';
  const dot = (x, y, c) => { t += `<circle cx="${x}" cy="${y}" r=".9" fill="${c}"/>`; };
  const kind = el.dataset.kind;
  if (kind === 'spiral') {
    [[0, '#f59322'], [Math.PI, DEEP_BLUE]].forEach(([ph, c]) => {
      let d = '';
      for (let a = 0; a < 10.5; a += .25) d += `${a ? 'L' : 'M'}${16 + a * 1.25 * Math.cos(a + ph)} ${16 + a * 1.25 * Math.sin(a + ph)}`;
      t += `<path d="${d}" fill="none" stroke="${c}" stroke-width="1.7"/>`;
    });
  } else if (kind === 'circle') {
    for (let i = 0; i < 90; i++) { const a = rand() * 6.28, r = 10 + rand() * 2.5; dot(16 + r * Math.cos(a), 16 + r * Math.sin(a), o); }
    for (let i = 0; i < 60; i++) { const a = rand() * 6.28, r = rand() * 6; dot(16 + r * Math.cos(a), 16 + r * Math.sin(a), b); }
  } else if (kind === 'xor') {
    for (let i = 0; i < 150; i++) {
      const x = rand() * 26 + 3, y = rand() * 26 + 3;
      if (Math.abs(x - 16) > 1.5 && Math.abs(y - 16) > 1.5) dot(x, y, (x < 16) === (y < 16) ? b : o);
    }
  } else {
    for (let i = 0; i < 50; i++) {
      const a = rand() * 6.28, r = rand() * 4.5;
      dot(11 + r * Math.cos(a), 11 + r * Math.sin(a), o);
      dot(21 + r * Math.cos(a * 3), 21 + r * Math.sin(a * 3), b);
    }
  }
  el.innerHTML = t;
}

drawNetwork('net-site');
drawNetwork('net-trial');
drawPlot('plot-site');
drawPlot('plot-trial');
document.querySelectorAll('.thumb').forEach(drawThumb);
```
